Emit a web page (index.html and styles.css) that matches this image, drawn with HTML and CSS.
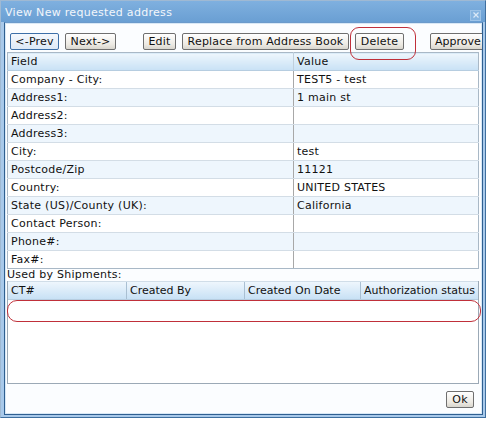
FILE: index.html
```html
<!DOCTYPE html>
<html>
<head>
<meta charset="utf-8">
<link rel="stylesheet" href="styles.css">
</head>
<body>
<div class="window">
  <div class="titlebar">
    <span class="title">View New requested address</span>
    <span class="close">
      <svg width="8" height="8" viewBox="0 0 8 8"><path d="M1.5 1.5 L6.5 6.5 M6.5 1.5 L1.5 6.5" stroke="#dbe9f7" stroke-width="1.2"/></svg>
    </span>
  </div>
  <div class="content">
    <div class="toolbar">
      <button class="btn btn-prev">&lt;-Prev</button>
      <button class="btn btn-next">Next-&gt;</button>
      <button class="btn btn-edit">Edit</button>
      <button class="btn btn-replace">Replace from Address Book</button>
      <button class="btn btn-delete">Delete</button>
      <button class="btn btn-approve">Approve</button>
    </div>
    <table class="grid details">
      <thead>
        <tr><th class="c-field">Field</th><th>Value</th></tr>
      </thead>
      <tbody>
        <tr><td>Company - City:</td><td>TEST5 - test</td></tr>
        <tr class="alt"><td>Address1:</td><td>1 main st</td></tr>
        <tr><td>Address2:</td><td></td></tr>
        <tr class="alt"><td>Address3:</td><td></td></tr>
        <tr><td>City:</td><td>test</td></tr>
        <tr class="alt"><td>Postcode/Zip</td><td>11121</td></tr>
        <tr><td>Country:</td><td>UNITED STATES</td></tr>
        <tr class="alt"><td>State (US)/County (UK):</td><td>California</td></tr>
        <tr><td>Contact Person:</td><td></td></tr>
        <tr class="alt"><td>Phone#:</td><td></td></tr>
        <tr><td>Fax#:</td><td></td></tr>
      </tbody>
    </table>
    <div class="used">Used by Shipments:</div>
    <div class="shipments">
      <div class="ship-head">
        <div class="sh c1">CT#</div>
        <div class="sh c2">Created By</div>
        <div class="sh c3">Created On Date</div>
        <div class="sh c4">Authorization status</div>
      </div>
    </div>
    <div class="footer">
      <button class="btn btn-ok">Ok</button>
    </div>
  </div>
  <div class="mark mark-delete"></div>
  <div class="mark mark-row"></div>
</div>
</body>
</html>
```
FILE: styles.css
```css
html, body {
  margin: 0;
  padding: 0;
  background: #ffffff;
}
body {
  font-family: "DejaVu Sans", Verdana, sans-serif;
  font-size: 11px;
  color: #111;
}
.window {
  position: relative;
  width: 486px;
  height: 418px;
  box-sizing: border-box;
  background: #a8c9ea;
  border: 1px solid #9fb9d3;
  border-right-color: #3f6f9f;
  border-bottom-color: #3f6f9f;
  padding: 0 2px 2px 2px;
  display: flex;
  flex-direction: column;
}
.titlebar {
  height: 21px;
  margin: 0 -2px;
  background: linear-gradient(#7fb0df, #6a9fd3);
  display: flex;
  align-items: center;
  justify-content: space-between;
  padding: 0 4px 0 4px;
  color: #f2f6fb;
}
.title {
  font-size: 11px;
  letter-spacing: 0.3px;
  padding-top: 1px;
}
.close {
  width: 11px;
  height: 11px;
  margin-top: 7px;
  background: #86b4e0;
  border: 1px solid #9ec4e8;
  display: flex;
  align-items: center;
  justify-content: center;
  box-sizing: border-box;
}
.content {
  flex: 1;
  background: #fbfdff;
  border: 1px solid #2f5f90;
  border-top: 1px solid #6b9acb;
  margin-left: 1px;
  margin-right: 0;
  display: flex;
  flex-direction: column;
  padding: 0 0 0 1px;
  box-shadow: inset 0 0 0 1px #d8e8f6;
}
.toolbar {
  display: flex;
  align-items: center;
  height: 17px;
  margin-top: 10px;
  padding-left: 4px;
  white-space: nowrap;
  overflow: hidden;
}
.btn {
  font-family: "DejaVu Sans", Verdana, sans-serif;
  font-size: 11px;
  letter-spacing: 0.2px;
  height: 17px;
  padding: 0;
  margin: 0;
  border: 1px solid #6f6f6f;
  border-radius: 2px;
  background: linear-gradient(#ffffff, #ece9e2 70%, #d8d6ce);
  color: #111;
  line-height: 15px;
  flex: none;
}
.btn-prev { width: 49px; border-color: #3c6fa8; background: linear-gradient(#f4f8fd, #dde9f6); }
.btn-next { width: 51px; margin-left: 6px; }
.btn-edit { width: 33px; margin-left: 27px; }
.btn-replace { width: 167px; margin-left: 6px; }
.btn-delete { width: 49px; margin-left: 6px; }
.btn-approve { width: 60px; margin-left: 26px; text-align: left; padding-left: 4px; letter-spacing: 0; }

.grid {
  border-collapse: collapse;
}
.details {
  margin-top: 2px;
  margin-left: 1px;
  width: 472px;
  border: 1px solid #a9b8c6;
  table-layout: fixed;
  letter-spacing: 0.25px;
}
.details th, .details td {
  height: 17px;
  padding: 0 0 0 3px;
  text-align: left;
  font-weight: normal;
  border-bottom: 1px solid #d3dde6;
  white-space: nowrap;
  line-height: 16px;
}
.details th {
  background: linear-gradient(#eef6fd, #c8e1f5);
  border-bottom: 1px solid #b6cde0;
}
.details .c-field { width: 282px; }
.details th:first-child, .details td:first-child {
  border-right: 1px solid #a8a8a8;
}
.details th:first-child { border-right-color: #c0cfdc; }
.details tbody tr td { background: #ffffff; }
.details tbody tr.alt td { background: #eef6fd; }
.details tbody tr:last-child td { border-bottom: 1px solid #a9b8c6; }

.used {
  height: 12px;
  line-height: 12px;
  margin-left: 1px;
  letter-spacing: 0.25px;
}
.shipments {
  margin-left: 1px;
  width: 470px;
  height: 102px;
  border: 1px solid #9ba9b6;
  border-top: none;
  background: #ffffff;
}
.ship-head {
  display: flex;
  height: 17px;
  background: linear-gradient(#eef6fd, #c8e1f5);
  border-top: 1px solid #d0dde8;
  border-bottom: 1px solid #b6cde0;
}
.sh {
  padding-left: 3px;
  line-height: 17px;
  box-sizing: border-box;
  border-right: 1px solid #a9bfd2;
  white-space: nowrap;
  overflow: hidden;
}
.c1 { width: 119px; }
.c2 { width: 118px; }
.c3 { width: 116px; }
.c4 { flex: 1; border-right: none; }

.footer {
  display: flex;
  justify-content: flex-end;
  padding-right: 8px;
  margin-top: 7px;
}
.btn-ok { width: 28px; height: 17px; }

.mark {
  position: absolute;
  border: 1px solid #c0303a;
  pointer-events: none;
}
.mark-delete {
  left: 349px;
  top: 26px;
  width: 64px;
  height: 31px;
  border-radius: 9px;
}
.mark-row {
  left: 6px;
  top: 299px;
  width: 472px;
  height: 20px;
  border-radius: 10px;
}
```
